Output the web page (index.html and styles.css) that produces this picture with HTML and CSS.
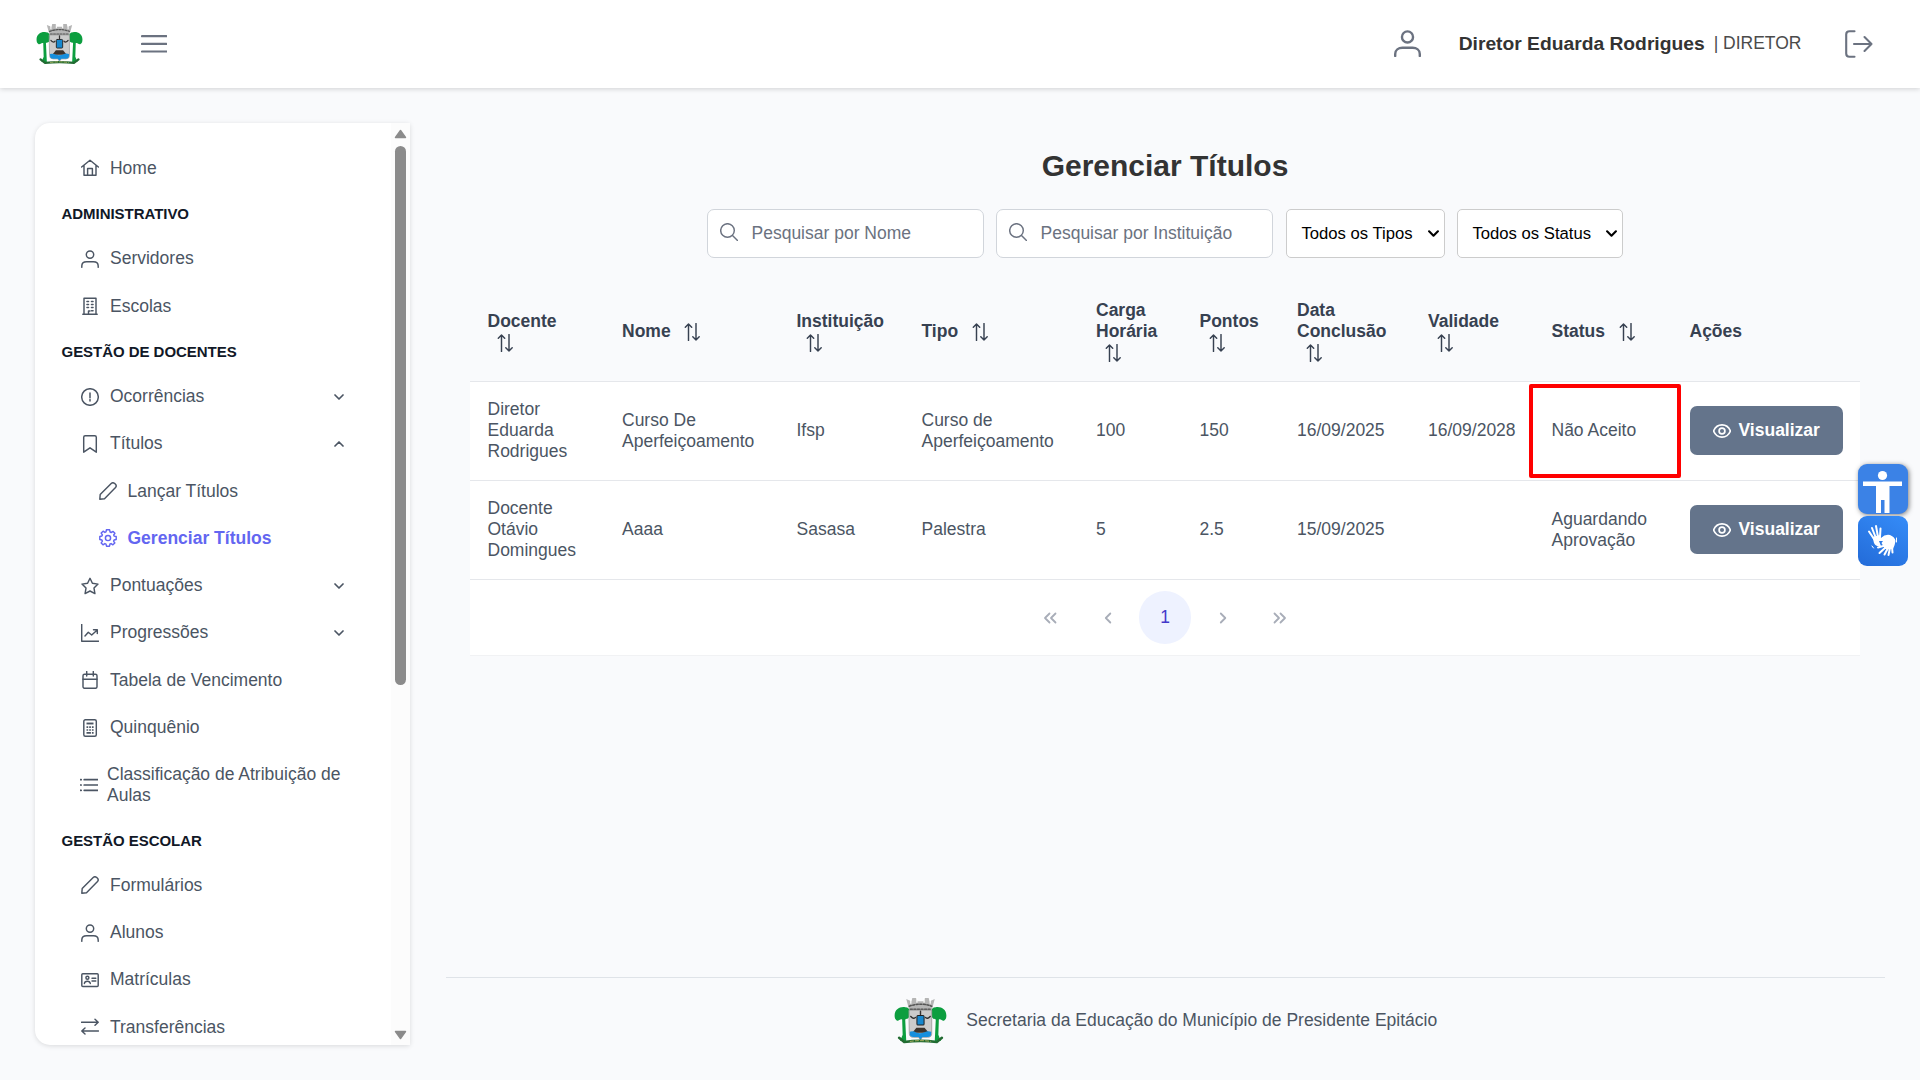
FILE: index.html
```html
<!DOCTYPE html>
<html lang="pt-BR">
<head>
<meta charset="utf-8">
<title>Gerenciar Títulos</title>
<link rel="stylesheet" href="styles.css">
</head>
<body>
<svg class="defs" aria-hidden="true">
  <symbol id="home" viewBox="0 0 18 18"><path d="M.6 8 9 1.2 17.400 8M3 6.400V16.300H15V6.400M6.600 16.300V9.400H11.400V16.300"/></symbol>
  <symbol id="user" viewBox="0 0 18 18"><circle cx="9" cy="4.600" r="3.700"/><path d="M.8 17.300V16C.8 13.300 3 11.800 5.600 11.800H12.400C15 11.800 17.200 13.300 17.200 16V17.300"/></symbol>
  <symbol id="building" viewBox="0 0 18 18"><path d="M3 17V1.200H15V17M1.800 17.200H16.200M7.500 17V14H9"/><path stroke-width="1.600" d="M6 4.500H7.500M10.500 4.500H12M6 7.500H7.500M10.500 7.500H12M6 10.500H7.500M10.500 10.500H12M10.500 13.700H12"/></symbol>
  <symbol id="alert" viewBox="0 0 18 18"><circle cx="9" cy="9" r="8.300"/><path stroke-width="1.500" d="M9 5V9.700M9 11.600V13.100"/></symbol>
  <symbol id="bookmark" viewBox="0 0 18 18"><path d="M2.700 17.200V2.200C2.700 1.200 3.200.8 4.200.8H13.800C14.800.8 15.300 1.200 15.300 2.200V17.200L9 12.800Z"/></symbol>
  <symbol id="pencil" viewBox="0 0 18 18"><path d="M.8 17.200 1.200 12.500 12.200 1.500C13.200.6 14.500.6 15.500 1.300L16.700 2.500C17.400 3.500 17.400 4.600 16.500 5.600L5.500 16.700Z"/></symbol>
  <symbol id="cog" viewBox="0 0 18 18"><circle cx="9" cy="9" r="2.600"/><path d="M7.400.8H10.600L11.100 3 12.200 3.500 14.100 2.400 15.900 4.300 14.700 6 15.100 7.100 17.200 7.500V10.500L15.100 11 14.600 12.100 15.800 14 13.900 15.800 12.100 14.600 11 15 10.500 17.200H7.500L7 15.100 5.900 14.600 4 15.800 2.200 13.900 3.400 12.100 2.900 11 .8 10.500V7.500L2.900 7 3.400 5.900 2.200 4.100 4.100 2.200 5.900 3.400 7 2.900Z"/></symbol>
  <symbol id="star" viewBox="0 0 18 18"><path d="M9 1.300 11.400 6.300 17 7.100 13 11.100 13.900 16.600 9 14 4.100 16.600 5 11.100 1 7.100 6.600 6.300Z"/></symbol>
  <symbol id="chart" viewBox="0 0 18 18"><path d="M.7.4V17.200H17.600M4 12 7.300 8.300 10.700 11 16 6.200M12.500 5.800H16.300V9.500"/></symbol>
  <symbol id="calendar" viewBox="0 0 18 18"><rect x="2" y="3.300" width="14" height="14" rx="1.500"/><path d="M2 8.300H16M5.700.5V5M12.300.5V5" /></symbol>
  <symbol id="calc" viewBox="0 0 18 18"><rect x="2.800" y=".8" width="12.500" height="16.400" rx="1.500"/><path stroke-width="1.900" stroke-linecap="butt" d="M5.500 4.500H12.500"/><path stroke-width="1.700" stroke-linecap="butt" d="M5.500 8.200H7.200M8.200 8.200H9.900M10.900 8.200H12.600M5.500 11H7.200M8.200 11H9.900M10.900 11H12.600M5.500 13.900H9.900M10.900 13.900H12.600"/></symbol>
  <symbol id="list" viewBox="0 0 18 18"><path d="M4.200 3.700H18M4.200 9H18M4.200 14.300H18M.4 3.700H1.200M.4 9H1.200M.4 14.300H1.200"/></symbol>
  <symbol id="card" viewBox="0 0 18 18"><rect x=".8" y="2.800" width="16.400" height="12.700" rx="1"/><circle cx="6.400" cy="6.800" r="1.500"/><path d="M3.400 12.500C3.600 9.500 9 9.500 9.300 12.500M11 7.300H14.800M11 10H14.800"/></symbol>
  <symbol id="swap" viewBox="0 0 18 18"><path d="M.5 4.300H17M14 1.300 17.200 4.300 14 7.300M17.500 13H1M4 10 .8 13 4 16"/></symbol>
  <symbol id="down" viewBox="0 0 10 10"><path d="M1 3 5 7 9 3"/></symbol>
  <symbol id="up" viewBox="0 0 10 10"><path d="M1 7 5 3 9 7"/></symbol>
  <symbol id="search" viewBox="0 0 18 18"><circle cx="7.500" cy="7.500" r="6.800"/><path d="M12.500 12.500 17.500 17.500"/></symbol>
  <symbol id="sort" viewBox="0 0 18 18"><path d="M5.500 17.500V1M2.300 4.200 5.500 1 8.700 4.200M13 .5V17M9.800 13.800 13 17 16.200 13.800"/></symbol>
  <symbol id="eye" viewBox="0 0 18 18"><path d="M.6 9C3.800.9 14.200.9 17.400 9 14.200 17.100 3.800 17.100.6 9Z"/><circle cx="9" cy="9" r="2.900"/></symbol>
  <symbol id="crest" viewBox="0 0 52 46">
    <path fill="#b5b5b5" d="M12 2 17 4 18 1H22L23 4H29L30 1H34L35 4 40 2 37 13H15Z"/>
    <path stroke="#fff" stroke-width="1.200" d="M16.500 2V6M22.500 0V5M29.500 0V5M35.500 2V6"/>
    <path stroke="#555" stroke-dasharray="2 1.500" d="M15 9Q26 5 37 9M16 12H36"/>
    <path fill="#0c9e3f" d="M1 21C-1 13 5 9 11 10 15 10 16 13 15 18 15 22 12 21 11 22L12 43H6L8.500 37 8 22C5 21 4 26 1 21ZM51 21C53 13 47 9 41 10 37 10 36 13 37 18 37 22 40 21 41 22L40 43H46L43.500 37 44 22C47 21 48 26 51 21Z"/>
    <path fill="#cbcbcb" stroke="#999" stroke-width=".8" d="M15 13H37V36Q37 39.500 33 39.500H28L26 42 24 39.500H19Q15 39.500 15 36Z"/>
    <path stroke="#333" stroke-width="1.400" d="M16.500 19Q19 22 21 20M31 20Q33 22 35.500 19M26 14V17"/>
    <rect x="22.500" y="18" width="7" height="9.500" rx="1" fill="#1687ce" stroke="#222" stroke-width="1"/>
    <path fill="#3b332c" d="M22 30H30L34 35H18Z"/>
    <path fill="#168fdd" d="M15.500 34Q19 33 22 35 26 36 30 34.500 33 33 36.500 34V36Q36.500 39.200 33 39.200H28L26 41.500 24 39.200H19Q15.500 39.200 15.500 36Z"/>
    <path stroke="#226b32" stroke-width="2.500" d="M5 40 10 44Q26 42 42 44L47 40"/>
    <path stroke="#c8bd65" stroke-width=".8" stroke-dasharray="3 2" d="M16 43.500Q26 42 36 43.500"/>
  </symbol>
</svg>

<header class="topbar">
  <svg class="logo"><use href="#crest"/></svg>
  <svg class="burger" viewBox="0 0 26 18"><path d="M1 1.200H25.500M1 8.900H25.500M1 16.500H25.500"/></svg>
  <div class="account">
    <svg class="account-icon" viewBox="0 0 18 18"><use href="#user"/></svg>
    <strong class="account-name">Diretor Eduarda Rodrigues</strong>
    <span class="account-role">| DIRETOR</span>
    <svg class="logout" viewBox="0 0 28 28"><path d="M9.500 1.200H4.500Q1.200 1.200 1.200 4.500V23.500Q1.200 26.800 4.500 26.800H9.500M9 14H26.500M19.500 7 26.500 14 19.500 21"/></svg>
  </div>
</header>

<div class="layout">
  <aside class="sidebar">
    <nav class="menu">
      <a class="item"><svg><use href="#home"/></svg>Home</a>
      <h6 class="section">ADMINISTRATIVO</h6>
      <a class="item"><svg><use href="#user"/></svg>Servidores</a>
      <a class="item"><svg><use href="#building"/></svg>Escolas</a>
      <h6 class="section">GESTÃO DE DOCENTES</h6>
      <a class="item"><svg><use href="#alert"/></svg>Ocorrências<svg class="chev"><use href="#down"/></svg></a>
      <a class="item"><svg><use href="#bookmark"/></svg>Títulos<svg class="chev"><use href="#up"/></svg></a>
      <a class="item sub"><svg><use href="#pencil"/></svg>Lançar Títulos</a>
      <a class="item sub active"><svg><use href="#cog"/></svg>Gerenciar Títulos</a>
      <a class="item"><svg><use href="#star"/></svg>Pontuações<svg class="chev"><use href="#down"/></svg></a>
      <a class="item"><svg><use href="#chart"/></svg>Progressões<svg class="chev"><use href="#down"/></svg></a>
      <a class="item"><svg><use href="#calendar"/></svg>Tabela de Vencimento</a>
      <a class="item"><svg><use href="#calc"/></svg>Quinquênio</a>
      <a class="item long"><svg><use href="#list"/></svg><span>Classificação de Atribuição de Aulas</span></a>
      <h6 class="section">GESTÃO ESCOLAR</h6>
      <a class="item"><svg><use href="#pencil"/></svg>Formulários</a>
      <a class="item"><svg><use href="#user"/></svg>Alunos</a>
      <a class="item"><svg><use href="#card"/></svg>Matrículas</a>
      <a class="item"><svg><use href="#swap"/></svg>Transferências</a>
    </nav>
    <div class="scroll">
      <svg class="arrow" viewBox="0 0 13 10"><path d="M6.500 1.500 11.500 8.500H1.500Z"/></svg>
      <div class="thumb"></div>
      <svg class="arrow last" viewBox="0 0 13 10"><path d="M6.500 8.500 11.500 1.500H1.500Z"/></svg>
    </div>
  </aside>

  <main class="main">
    <h1 class="title">Gerenciar Títulos</h1>
    <div class="filters">
      <div class="search"><svg><use href="#search"/></svg>Pesquisar por Nome</div>
      <div class="search"><svg><use href="#search"/></svg>Pesquisar por Instituição</div>
      <div class="select types">Todos os Tipos<svg><use href="#down"/></svg></div>
      <div class="select status">Todos os Status<svg><use href="#down"/></svg></div>
    </div>
    <table class="grid">
      <colgroup><col class="c1"><col class="c2"><col class="c3"><col class="c4"><col class="c5"><col class="c6"><col class="c7"><col class="c8"><col class="c9"><col class="c10"></colgroup>
      <thead><tr>
        <th>Docente<br><svg><use href="#sort"/></svg></th>
        <th>Nome <svg><use href="#sort"/></svg></th>
        <th>Instituição<br><svg><use href="#sort"/></svg></th>
        <th>Tipo <svg><use href="#sort"/></svg></th>
        <th>Carga<br>Horária<br><svg><use href="#sort"/></svg></th>
        <th>Pontos<br><svg><use href="#sort"/></svg></th>
        <th>Data<br>Conclusão<br><svg><use href="#sort"/></svg></th>
        <th>Validade<br><svg><use href="#sort"/></svg></th>
        <th>Status <svg><use href="#sort"/></svg></th>
        <th>Ações</th>
      </tr></thead>
      <tbody>
        <tr><td>Diretor<br>Eduarda<br>Rodrigues</td><td>Curso De<br>Aperfeiçoamento</td><td>Ifsp</td><td>Curso de<br>Aperfeiçoamento</td><td>100</td><td>150</td><td>16/09/2025</td><td>16/09/2028</td><td class="marked">Não Aceito</td><td><div class="view"><svg><use href="#eye"/></svg>Visualizar</div></td></tr>
        <tr><td>Docente<br>Otávio<br>Domingues</td><td>Aaaa</td><td>Sasasa</td><td>Palestra</td><td>5</td><td>2.5</td><td>15/09/2025</td><td></td><td>Aguardando<br>Aprovação</td><td><div class="view"><svg><use href="#eye"/></svg>Visualizar</div></td></tr>
      </tbody>
    </table>
    <div class="pager">
      <span class="page"><svg viewBox="0 0 14 14"><path d="M6.500 2.500 2 7 6.500 11.500M12.500 2.500 8 7 12.500 11.500"/></svg></span>
      <span class="page"><svg viewBox="0 0 14 14"><path d="M9.300 2.500 4.800 7 9.300 11.500"/></svg></span>
      <span class="page current">1</span>
      <span class="page"><svg viewBox="0 0 14 14"><path d="M4.800 2.500 9.300 7 4.800 11.500"/></svg></span>
      <span class="page"><svg viewBox="0 0 14 14"><path d="M1.500 2.500 6 7 1.500 11.500M7.500 2.500 12 7 7.500 11.500"/></svg></span>
    </div>
    <footer class="footer"><svg><use href="#crest"/></svg>Secretaria da Educação do Município de Presidente Epitácio</footer>
  </main>
</div>

<div class="widgets">
  <svg class="widget access" viewBox="0 0 50 50"><circle cx="24.500" cy="11.500" r="4.600"/><path d="M5 17.500H44V22H31.500V49H26.500V36H23V49H18V22H5Z"/></svg>
  <svg class="widget libras" viewBox="0 0 50 50">
    <path d="M14.500 21 22 19 23 22Q27 18 32 19 37 21 37.500 25 37 29 35 33L27 33 23.500 27 25 25 21 25 23 30Q18 31 16 27Z"/>
    <path class="finger" d="M16 23 11 15.500M17.500 21 14 12M20 21 18 10M22 21 22.500 12.500"/>
    <path class="finger" d="M27 29.500 20 31.500M28 31 21.500 37M30 32 26.500 38.500M32 32 30.500 39M34 31 34.500 36.500"/>
    <path class="finger thin" d="M38.500 22V26M14 30 15.500 32"/>
  </svg>
</div>
</body>
</html>
```
FILE: styles.css
```css
* { box-sizing: border-box; }
html { font-size: 17.5px; }
body {
  margin: 0;
  height: 1080px;
  display: flex;
  flex-direction: column;
  overflow: hidden;
  background: #f9fafc;
  color: #4b5563;
  font: 17.5px/21px "Liberation Sans", Arial, sans-serif;
}
svg { fill: none; stroke: currentColor; stroke-width: 1.45; stroke-linecap: round; stroke-linejoin: round; flex: none; }
.defs { position: absolute; width: 0; height: 0; }

.topbar {
  height: 88px;
  flex: none;
  display: flex;
  align-items: center;
  padding: 0 47px 1px 36px;
  background: #fff;
  box-shadow: 0 1px 5px rgba(0, 0, 0, .17);
}
.logo { width: 47px; height: 42px; stroke: none; }
.burger { width: 26px; height: 18px; margin-left: 58px; color: #6b7280; stroke-width: 2.2; }
.account { display: flex; align-items: center; margin-left: auto; color: #6b7280; }
.account-icon { width: 27px; height: 27px; stroke-width: 1.600; }
.account-name { margin-left: 37.500px; padding-bottom: 1px; color: #333; font-size: 19.25px; }
.account-role { margin-left: 9px; padding-bottom: 1px; color: #4b4b4b; }
.logout { width: 28px; height: 28px; margin-left: 43.500px; stroke-width: 2.1; }

.layout { flex: 1; display: flex; padding: 35px 35px 0; min-height: 0; }
.sidebar {
  width: 375px;
  height: 922px;
  flex: none;
  display: flex;
  border-radius: 15px 2px 2px 15px;
  background: #fff;
  box-shadow: 0 1px 5px rgba(0, 0, 0, .13);
}
.menu { width: 356px; padding: 21.600px 45px 0 26.500px; overflow: hidden; }
.item { display: flex; align-items: center; height: 47.300px; padding: 0 0 0 19.400px; white-space: nowrap; }
.item svg { width: 18px; height: 18px; margin-right: 11.100px; }
.item .chev { width: 10px; height: 10px; margin: 0 2px 0 auto; stroke-width: 1.700; }
.item.sub { padding-left: 37px; }
.item.sub svg { margin-right: 11px; }
.item.active { color: #6366f1; font-weight: 700; }
.item.long { height: 67.300px; padding-left: 18px; white-space: normal; }
.item.long svg { margin-right: 9.500px; stroke-width: 1.700; }
.section { height: 43.200px; margin: 0; color: #111827; font-size: 15px; line-height: 44.500px; letter-spacing: -.04px; }

.scroll { width: 19px; display: flex; flex-direction: column; align-items: center; padding: 6px 0 5px; background: #fcfcfc; }
.arrow { width: 13px; height: 10px; fill: #8b8b8b; stroke: #8b8b8b; }
.thumb { width: 11px; height: 539px; margin-top: 7px; border-radius: 6px; background: #8b8b8b; }
.arrow.last { margin-top: auto; }

.main { flex: 1; display: flex; flex-direction: column; margin-left: 35px; min-width: 0; }
.title { margin: 25px 0 0; color: #333; font-size: 30px; line-height: 36px; text-align: center; }
.filters { display: flex; justify-content: center; gap: 12px; margin: 25px 0 0 -1px; }
.search, .select { display: flex; align-items: center; height: 49px; background: #fff; white-space: nowrap; }
.search { width: 277px; padding: 0 0 1px 12px; border: 1px solid #d1d5db; border-radius: 7px; color: #6b7280; }
.search svg { width: 18px; height: 18px; margin: 0 14px 2px 0; }
.select { justify-content: space-between; border: 1px solid #ccc; border-radius: 5px; padding: 0 5px 0 15px; color: #000; font-size: 16.670px; }
.select svg { width: 11px; height: 11px; stroke-width: 1.900; }
.types { width: 159px; margin-left: 1px; }
.status { width: 166px; }

.grid { width: 1390px; margin: 25px 0 0 25px; table-layout: fixed; border-collapse: separate; border-spacing: 0; text-align: left; }
.c1 { width: 134.500px; } .c2 { width: 174.500px; } .c3 { width: 125px; } .c4 { width: 174.500px; } .c5 { width: 103.500px; }
.c6 { width: 97.500px; } .c7 { width: 131px; } .c8 { width: 123.500px; } .c9 { width: 138px; } .c10 { width: 188px; }
.grid th, .grid td { height: 99px; padding: 0 0 1px 17.500px; border-bottom: 1px solid #e5e7eb; vertical-align: middle; white-space: nowrap; }
.grid th { color: #374151; }
.grid th svg { width: 18px; height: 18px; margin-left: 8px; vertical-align: -4px; }
.grid td { background: #fff; }
.marked { position: relative; }
.marked::after { content: ""; box-sizing: border-box; position: absolute; left: -5px; top: 1.500px; width: 151.500px; height: 94.500px; border: 4px solid #f00; border-radius: 2px; }
.view { display: flex; align-items: center; width: 153px; height: 49px; padding: 0 0 0 23px; border-radius: 7px; background: #64748b; color: #fff; font-weight: 700; }
.view svg { width: 18px; height: 18px; margin-right: 8px; stroke-width: 1.700; }

.pager { display: flex; justify-content: center; align-items: center; gap: 5px; width: 1390px; height: 76px; margin-left: 25px; background: #fff; border-bottom: 1px solid #f1f2f4; }
.page { display: flex; align-items: center; justify-content: center; width: 52.500px; height: 52.500px; border-radius: 50%; color: #a8adb8; }
.page svg { width: 14px; height: 14px; stroke-width: 1.800; }
.page.current { background: #eef2ff; color: #4338ca; }

.footer { display: flex; align-items: center; justify-content: center; gap: 19.500px; height: 103px; margin: auto 0 0 1px; padding: 0 0 18px; border-top: 1px solid #dfe3e8; }
.footer svg { width: 53px; height: 47px; stroke: none; }

.widgets { position: absolute; left: 1858px; top: 464px; display: flex; flex-direction: column; gap: 1.500px; }
.widget { width: 50px; height: 50px; border-radius: 9px; fill: #fff; stroke: none; }
.access { background: #3b82e6; box-shadow: 1px 1px 5px rgba(0, 0, 0, .5); }
.libras { background: linear-gradient(30deg, #236bd8, #358cf8); }
.finger { stroke: #fff; stroke-width: 2; fill: none; }
.finger.thin { stroke-width: 1; }
```
